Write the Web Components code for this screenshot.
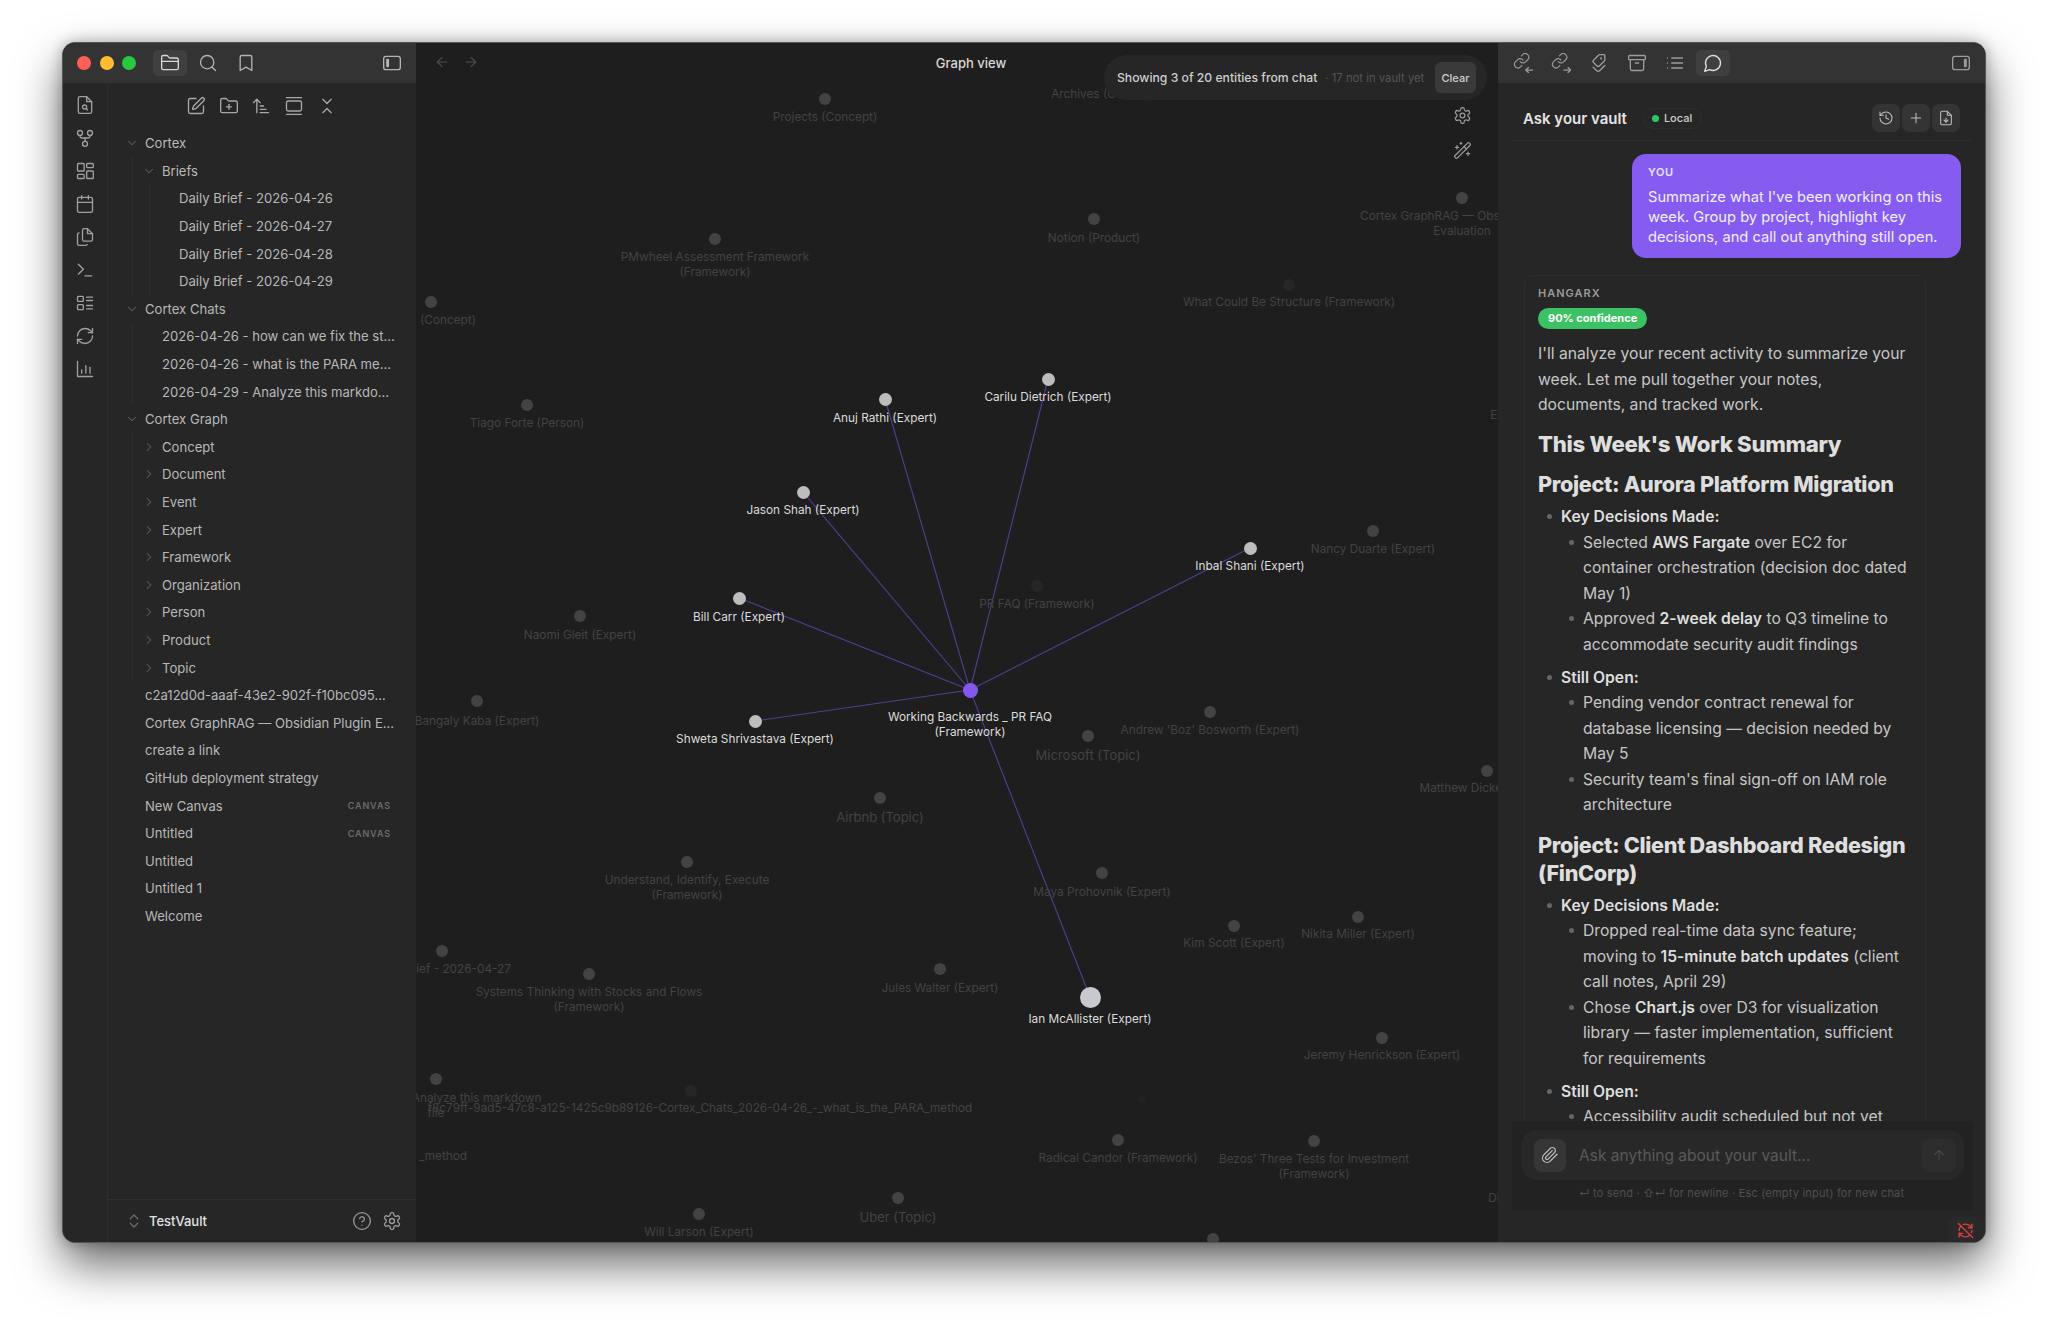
<!DOCTYPE html>
<html>
<head>
<meta charset="utf-8">
<title>Graph view</title>
<style>
  html, body { margin: 0; background: #fff; font-family: Inter, "Liberation Sans", sans-serif; }
  body { width: 2048px; height: 1326px; overflow: hidden; }
</style>
</head>
<body>

<ob-window>
  <ob-left slot="left">
    <tree-folder name="Cortex">
      <tree-folder name="Briefs">
        <tree-file>Daily Brief - 2026-04-26</tree-file>
        <tree-file>Daily Brief - 2026-04-27</tree-file>
        <tree-file>Daily Brief - 2026-04-28</tree-file>
        <tree-file>Daily Brief - 2026-04-29</tree-file>
      </tree-folder>
    </tree-folder>
    <tree-folder name="Cortex Chats">
      <tree-file>2026-04-26 - how can we fix the st...</tree-file>
      <tree-file>2026-04-26 - what is the PARA me...</tree-file>
      <tree-file>2026-04-29 - Analyze this markdo...</tree-file>
    </tree-folder>
    <tree-folder name="Cortex Graph">
      <tree-folder name="Concept" closed></tree-folder>
      <tree-folder name="Document" closed></tree-folder>
      <tree-folder name="Event" closed></tree-folder>
      <tree-folder name="Expert" closed></tree-folder>
      <tree-folder name="Framework" closed></tree-folder>
      <tree-folder name="Organization" closed></tree-folder>
      <tree-folder name="Person" closed></tree-folder>
      <tree-folder name="Product" closed></tree-folder>
      <tree-folder name="Topic" closed></tree-folder>
    </tree-folder>
    <tree-file>c2a12d0d-aaaf-43e2-902f-f10bc095...</tree-file>
    <tree-file>Cortex GraphRAG — Obsidian Plugin E...</tree-file>
    <tree-file>create a link</tree-file>
    <tree-file>GitHub deployment strategy</tree-file>
    <tree-file tag="CANVAS">New Canvas</tree-file>
    <tree-file tag="CANVAS">Untitled</tree-file>
    <tree-file>Untitled</tree-file>
    <tree-file>Untitled 1</tree-file>
    <tree-file>Welcome</tree-file>
  </ob-left>

  <graph-view slot="center"></graph-view>

  <chat-panel slot="right">
    <chat-bubble>Summarize what I've been working on this week. Group by project, highlight key decisions, and call out anything still open.</chat-bubble>
    <chat-answer>
      <md-p>I'll analyze your recent activity to summarize your week. Let me pull together your notes, documents, and tracked work.</md-p>
      <md-h level="1">This Week's Work Summary</md-h>
      <md-h level="2">Project: Aurora Platform Migration</md-h>
      <md-li level="1"><b>Key Decisions Made:</b></md-li>
      <md-li level="2">Selected <b>AWS Fargate</b> over EC2 for container orchestration (decision doc dated May 1)</md-li>
      <md-li level="2">Approved <b>2-week delay</b> to Q3 timeline to accommodate security audit findings</md-li>
      <md-li level="1" gap><b>Still Open:</b></md-li>
      <md-li level="2">Pending vendor contract renewal for database licensing — decision needed by May 5</md-li>
      <md-li level="2">Security team's final sign-off on IAM role architecture</md-li>
      <md-h level="2">Project: Client Dashboard Redesign (FinCorp)</md-h>
      <md-li level="1"><b>Key Decisions Made:</b></md-li>
      <md-li level="2">Dropped real-time data sync feature; moving to <b>15-minute batch updates</b> (client call notes, April 29)</md-li>
      <md-li level="2">Chose <b>Chart.js</b> over D3 for visualization library — faster implementation, sufficient for requirements</md-li>
      <md-li level="1" gap><b>Still Open:</b></md-li>
      <md-li level="2">Accessibility audit scheduled but not yet confirmed</md-li>
    </chat-answer>
  </chat-panel>
</ob-window>

<script>
// stroke icons, all on a 24 box
const ICONS = {
  folder: '<path d="M20 20a2 2 0 0 0 2-2V8a2 2 0 0 0-2-2h-7.9a2 2 0 0 1-1.69-.9L9.6 3.9A2 2 0 0 0 7.93 3H4a2 2 0 0 0-2 2v13a2 2 0 0 0 2 2Z"/><path d="M2 10h20"/>',
  search: '<circle cx="11" cy="11" r="8"/><path d="m21 21-4.3-4.3"/>',
  bookmark: '<path d="m19 21-7-4-7 4V5a2 2 0 0 1 2-2h10a2 2 0 0 1 2 2v16z"/>',
  paneleft: '<rect x="2" y="4" width="20" height="16" rx="3"/><rect x="5" y="7" width="3.5" height="10" rx="1" fill="currentColor" stroke="none"/>',
  paneright: '<rect x="2" y="4" width="20" height="16" rx="3"/><rect x="15.5" y="7" width="3.5" height="10" rx="1" fill="currentColor" stroke="none"/>',
  filesearch: '<path d="M14 2H6a2 2 0 0 0-2 2v16a2 2 0 0 0 2 2h12a2 2 0 0 0 2-2V8z"/><path d="M14 2v6h6"/><circle cx="11.5" cy="14.5" r="2.5"/><path d="M13.3 16.3 15 18"/>',
  graph: '<circle cx="6" cy="6" r="3"/><circle cx="18" cy="6" r="3"/><circle cx="12" cy="19" r="3"/><path d="M6 9v1a2 2 0 0 0 2 2h8a2 2 0 0 0 2-2V9"/><path d="M12 12v4"/>',
  dashboard: '<rect x="3" y="3" width="8" height="9" rx="1"/><rect x="14" y="3" width="8" height="5" rx="1"/><rect x="14" y="12" width="8" height="9" rx="1"/><rect x="3" y="16" width="8" height="5" rx="1"/>',
  calendar: '<rect x="3" y="4" width="18" height="18" rx="2"/><path d="M16 2v4M8 2v4M3 10h18"/>',
  files: '<path d="M15 2h-4a2 2 0 0 0-2 2v11a2 2 0 0 0 2 2h8a2 2 0 0 0 2-2V8Z"/><path d="M15 2v6h6"/><path d="M5 7a2 2 0 0 0-2 2v11a2 2 0 0 0 2 2h8a2 2 0 0 0 1.7-1"/>',
  terminal: '<path d="m4 17 6-6-6-6"/><path d="M12 19h8"/>',
  todo: '<rect x="3" y="4" width="7" height="6" rx="1"/><rect x="3" y="14" width="7" height="6" rx="1"/><path d="M14 5h7M14 9h7M14 15h7M14 19h7"/>',
  refresh: '<path d="M3 12a9 9 0 0 1 9-9 9.75 9.75 0 0 1 6.74 2.74L21 8"/><path d="M21 3v5h-5"/><path d="M21 12a9 9 0 0 1-9 9 9.75 9.75 0 0 1-6.74-2.74L3 16"/><path d="M8 16H3v5"/>',
  chart: '<path d="M3 3v18h18"/><path d="M8 17v-4"/><path d="M13 17V8"/><path d="M18 17v-7"/>',
  pen: '<path d="M12 3H5a2 2 0 0 0-2 2v14a2 2 0 0 0 2 2h14a2 2 0 0 0 2-2v-7"/><path d="M18.375 2.625a1 1 0 0 1 3 3l-9.013 9.014a2 2 0 0 1-.853.505l-2.873.84a.5.5 0 0 1-.62-.62l.84-2.873a2 2 0 0 1 .506-.852z"/>',
  folderplus: '<path d="M20 20a2 2 0 0 0 2-2V8a2 2 0 0 0-2-2h-7.9a2 2 0 0 1-1.69-.9L9.6 3.9A2 2 0 0 0 7.93 3H4a2 2 0 0 0-2 2v13a2 2 0 0 0 2 2Z"/><path d="M12 10v6"/><path d="M9 13h6"/>',
  sort: '<path d="m3 8 4-4 4 4"/><path d="M7 4v16"/><path d="M11 12h4"/><path d="M11 16h7"/><path d="M11 20h10"/>',
  gallery: '<path d="M3 2h18"/><rect x="3" y="6" width="18" height="12" rx="2"/><path d="M3 22h18"/>',
  collapse: '<path d="m7 20 5-5 5 5"/><path d="m7 4 5 5 5-5"/>',
  chevdown: '<path d="m6 9 6 6 6-6"/>',
  chevright: '<path d="m9 18 6-6-6-6"/>',
  updown: '<path d="m7 15 5 5 5-5"/><path d="m7 9 5-5 5 5"/>',
  help: '<circle cx="12" cy="12" r="10"/><path d="M9.09 9a3 3 0 0 1 5.83 1c0 2-3 3-3 3"/><path d="M12 17h.01"/>',
  gear: '<path d="M12.22 2h-.44a2 2 0 0 0-2 2v.18a2 2 0 0 1-1 1.73l-.43.25a2 2 0 0 1-2 0l-.15-.08a2 2 0 0 0-2.73.73l-.22.38a2 2 0 0 0 .73 2.73l.15.1a2 2 0 0 1 1 1.72v.51a2 2 0 0 1-1 1.74l-.15.09a2 2 0 0 0-.73 2.73l.22.38a2 2 0 0 0 2.73.73l.15-.08a2 2 0 0 1 2 0l.43.25a2 2 0 0 1 1 1.73V20a2 2 0 0 0 2 2h.44a2 2 0 0 0 2-2v-.18a2 2 0 0 1 1-1.73l.43-.25a2 2 0 0 1 2 0l.15.08a2 2 0 0 0 2.73-.73l.22-.39a2 2 0 0 0-.73-2.73l-.15-.08a2 2 0 0 1-1-1.74v-.5a2 2 0 0 1 1-1.74l.15-.09a2 2 0 0 0 .73-2.73l-.22-.38a2 2 0 0 0-2.73-.73l-.15.08a2 2 0 0 1-2 0l-.43-.25a2 2 0 0 1-1-1.73V4a2 2 0 0 0-2-2z"/><circle cx="12" cy="12" r="3"/>',
  wand: '<path d="m21.64 3.64-1.28-1.28a1.21 1.21 0 0 0-1.72 0L2.36 18.64a1.21 1.21 0 0 0 0 1.72l1.28 1.28a1.2 1.2 0 0 0 1.72 0L21.64 5.36a1.2 1.2 0 0 0 0-1.72"/><path d="m14 7 3 3"/><path d="M5 6v4"/><path d="M19 14v4"/><path d="M10 2v2"/><path d="M7 8H3"/><path d="M21 16h-4"/><path d="M11 3H9"/>',
  linkin: '<g transform="translate(0 -1) scale(.86)"><path d="M10 13a5 5 0 0 0 7.54.54l3-3a5 5 0 0 0-7.07-7.07l-1.72 1.71"/><path d="M14 11a5 5 0 0 0-7.54-.54l-3 3a5 5 0 0 0 7.07 7.07l1.71-1.71"/></g><path d="M15.5 20.5h8"/><path d="m18.5 17.5-3 3 3 3"/>',
  linkout: '<g transform="translate(0 -1) scale(.86)"><path d="M10 13a5 5 0 0 0 7.54.54l3-3a5 5 0 0 0-7.07-7.07l-1.72 1.71"/><path d="M14 11a5 5 0 0 0-7.54-.54l-3 3a5 5 0 0 0 7.07 7.07l1.71-1.71"/></g><path d="M15.5 20.5h8"/><path d="m20.5 17.5 3 3-3 3"/>',
  tags: '<g transform="rotate(90 12 12)"><path d="m15 5 6.3 6.3a2.4 2.4 0 0 1 0 3.4L17 19"/><path d="M9.586 5.586A2 2 0 0 0 8.172 5H3a1 1 0 0 0-1 1v5.172a2 2 0 0 0 .586 1.414L8.29 18.29a2.426 2.426 0 0 0 3.42 0l3.58-3.58a2.426 2.426 0 0 0 0-3.42z"/><circle cx="6.5" cy="9.5" r=".5"/></g>',
  archive: '<rect x="2" y="3" width="20" height="5" rx="1"/><path d="M4 8v11a2 2 0 0 0 2 2h12a2 2 0 0 0 2-2V8"/><path d="M10 12h4"/>',
  list: '<path d="M3 12h.01M3 18h.01M3 6h.01M8 12h13M8 18h13M8 6h13"/>',
  chat: '<path d="M7.9 20A9 9 0 1 0 4 16.1L2 22Z"/>',
  history: '<path d="M3 12a9 9 0 1 0 9-9 9.75 9.75 0 0 0-6.74 2.74L3 8"/><path d="M3 3v5h5"/><path d="M12 7v5l4 2"/>',
  plus: '<path d="M5 12h14M12 5v14"/>',
  filedown: '<path d="M14 2H6a2 2 0 0 0-2 2v16a2 2 0 0 0 2 2h12a2 2 0 0 0 2-2V8z"/><path d="M14 2v6h6"/><path d="M12 18v-6"/><path d="m9 15 3 3 3-3"/>',
  clip: '<path d="m21.44 11.05-9.19 9.19a6 6 0 0 1-8.49-8.49l8.57-8.57A4 4 0 1 1 18 8.84l-8.59 8.57a2 2 0 0 1-2.83-2.83l8.49-8.48"/>',
  up: '<path d="m5 12 7-7 7 7"/><path d="M12 19V5"/>',
  left: '<path d="m12 19-7-7 7-7"/><path d="M19 12H5"/>',
  right: '<path d="M5 12h14"/><path d="m12 5 7 7-7 7"/>',
  syncoff: '<path d="M21 8 18.74 5.74A9.75 9.75 0 0 0 12 3c-1 0-1.97.16-2.87.47"/><path d="M8 16H3v5"/><path d="M3 12c0-2.49 1-4.74 2.64-6.36"/><path d="m3 16 2.26 2.26A9.75 9.75 0 0 0 12 21c2.49 0 4.74-1 6.36-2.64"/><path d="M21 12c0 1-.16 1.97-.47 2.87"/><path d="M21 3v5h-5"/><path d="M22 22 2 2"/>'
};

class ObIcon extends HTMLElement {
  connectedCallback() {
    const size = this.getAttribute('size') || 20;
    const sw = this.getAttribute('sw') || 1.6;
    this.attachShadow({ mode: 'open' }).innerHTML = `
      <style>:host{display:inline-flex;align-items:center;justify-content:center;flex:none;line-height:0}</style>
      <svg width="${size}" height="${size}" viewBox="0 0 24 24" fill="none" stroke="currentColor"
        stroke-width="${sw}" stroke-linecap="round" stroke-linejoin="round">${ICONS[this.getAttribute('name')] || ''}</svg>`;
  }
}
customElements.define('ob-icon', ObIcon);

class ObWindow extends HTMLElement {
  constructor() {
    super();
    this.attachShadow({ mode: 'open' }).innerHTML = `
      <style>
        :host{display:grid;grid-template-columns:353px 1082px 487px;box-sizing:border-box;width:1924px;height:1201px;
          margin:42px 0 0 62px;border:1px solid #565656;border-radius:13px;overflow:hidden;background:#1e1e1e;
          box-shadow:0 22px 46px rgba(0,0,0,.58),0 0 14px rgba(0,0,0,.28)}
        ::slotted(*){min-width:0;min-height:0}
      </style>
      <slot name="left"></slot><slot name="center"></slot><slot name="right"></slot>`;
  }
}
customElements.define('ob-window', ObWindow);

class ObLeft extends HTMLElement {
  constructor() {
    super();
    const ribbon = ['filesearch', 'graph', 'dashboard', 'calendar', 'files', 'terminal', 'todo', 'refresh', 'chart']
      .map(n => `<ob-icon name="${n}"></ob-icon>`).join('');
    const acts = ['pen', 'folderplus', 'sort', 'gallery', 'collapse']
      .map(n => `<ob-icon name="${n}"></ob-icon>`).join('');
    this.attachShadow({ mode: 'open' }).innerHTML = `
      <style>
        :host{display:flex;flex-direction:column;background:#262626;color:#b4b4b4;height:100%;overflow:hidden}
        .bar{flex:none;height:40px;background:#333;display:flex;align-items:center;padding:0 14px 0 14px}
        .lights{display:flex;gap:8.5px;margin-right:17px}
        .lights i{width:14px;height:14px;border-radius:50%}
        .tab{width:34px;height:26px;display:flex;align-items:center;justify-content:center;border-radius:5px;margin-right:4px}
        .tab.on{background:#3f3f3f;color:#d8d8d8}
        .grow{flex:1}
        .body{flex:1;display:flex;min-height:0}
        .ribbon{flex:none;width:44px;border-right:1px solid #2f2f2f;display:flex;flex-direction:column;align-items:center;
          padding-top:5px;color:#a0a0a0}
        .ribbon ob-icon{height:33px}
        .side{flex:1;display:flex;flex-direction:column;min-width:0}
        .acts{flex:none;height:46px;display:flex;align-items:center;padding-left:78px;gap:12.7px;color:#a8a8a8}
        .tree{flex:1;padding:.5px 25px 0 7px;font-size:13.1px;min-height:0}
        .foot{flex:none;height:42px;border-top:1px solid #303030;display:flex;align-items:center;padding:0 14px 0 17px;color:#9a9a9a}
        .vault{margin-left:6px;font-size:13px;font-weight:500;color:#e2e2e2}
        .foot .h{margin-right:10px}
      </style>
      <div class="bar">
        <div class="lights"><i style="background:#ff5f57"></i><i style="background:#febc2e"></i><i style="background:#28c840"></i></div>
        <div class="tab on"><ob-icon name="folder"></ob-icon></div>
        <div class="tab"><ob-icon name="search"></ob-icon></div>
        <div class="tab"><ob-icon name="bookmark"></ob-icon></div>
        <div class="grow"></div>
        <ob-icon name="paneleft"></ob-icon>
      </div>
      <div class="body">
        <div class="ribbon">${ribbon}</div>
        <div class="side">
          <div class="acts">${acts}</div>
          <div class="tree"><slot></slot></div>
          <div class="foot">
            <ob-icon name="updown" size="18" style="color:#6e6e6e"></ob-icon>
            <span class="vault">TestVault</span>
            <div class="grow"></div>
            <ob-icon class="h" name="help"></ob-icon>
            <ob-icon name="gear"></ob-icon>
          </div>
        </div>
      </div>`;
  }
}
customElements.define('ob-left', ObLeft);

class TreeFolder extends HTMLElement {
  connectedCallback() {
    const closed = this.hasAttribute('closed');
    this.attachShadow({ mode: 'open' }).innerHTML = `
      <style>
        :host{display:block}
        .row{height:27.6px;display:flex;align-items:center;white-space:nowrap;color:#b8b8b8}
        ob-icon{width:14px;margin-left:10px;margin-right:6px;color:#5f5f5f}
        .kids{margin-left:17px;box-shadow:inset 1px 0 0 #2f2f2f}
      </style>
      <div class="row"><ob-icon name="${closed ? 'chevright' : 'chevdown'}" size="14" sw="1.8"></ob-icon>${this.getAttribute('name')}</div>
      ${closed ? '' : '<div class="kids"><slot></slot></div>'}`;
  }
}
customElements.define('tree-folder', TreeFolder);

class TreeFile extends HTMLElement {
  connectedCallback() {
    const tag = this.getAttribute('tag');
    this.attachShadow({ mode: 'open' }).innerHTML = `
      <style>
        :host{display:block}
        .row{height:27.6px;display:flex;align-items:center;justify-content:space-between;padding-left:30px;
          white-space:nowrap;color:#b8b8b8}
        .tag{font-size:9px;font-weight:600;letter-spacing:.9px;color:#6b6b6b}
      </style>
      <div class="row"><span><slot></slot></span>${tag ? `<span class="tag">${tag}</span>` : ''}</div>`;
  }
}
customElements.define('tree-file', TreeFile);

class GraphNode extends HTMLElement {
  connectedCallback() {
    const x = +this.getAttribute('x'), y = +this.getAttribute('y'), r = +this.getAttribute('r');
    const ly = +this.getAttribute('ly'), lx = +this.getAttribute('lx');
    const size = this.getAttribute('size') || 11.8;
    const fill = this.getAttribute('fill'), ink = this.getAttribute('ink');
    const label = this.getAttribute('label');
    this.attachShadow({ mode: 'open' }).innerHTML = `
      <style>
        :host{position:absolute;left:${x}px;top:${y}px;width:0;height:0}
        .dot{position:absolute;left:${-r}px;top:${-r}px;width:${2 * r}px;height:${2 * r}px;border-radius:50%;background:${fill}}
        .lab{position:absolute;left:${lx - x}px;top:${ly - y}px;transform:translate(-50%,-7.5px);white-space:pre;text-align:center;
          font-size:${size}px;line-height:15px;color:${ink}}
      </style>
      <div class="dot"></div><div class="lab">${label}</div>`;
  }
}
customElements.define('graph-node', GraphNode);

// page coordinates of the graph: x, y, label, y of first label line, [label x, radius, font size, dot colour]
const ACTIVE = [
  [970, 690, 'Working Backwards _ PR FAQ\n(Framework)', 717, 970, 7.5, 11.8, '#8458f0'],
  [1048, 379, 'Carilu Dietrich (Expert)', 397],
  [885, 399, 'Anuj Rathi (Expert)', 418],
  [803, 492, 'Jason Shah (Expert)', 510],
  [739, 598, 'Bill Carr (Expert)', 617],
  [755, 721, 'Shweta Shrivastava (Expert)', 739],
  [1250, 548, 'Inbal Shani (Expert)', 566],
  [1090, 997, 'Ian McAllister (Expert)', 1019, 1090, 10.5, 11.8, '#c8c8d0']
];
const DIM = [
  [825, 99, 'Projects (Concept)', 117],
  [1125, 76, 'Archives (Concept)', 94, 1105],
  [715, 239, 'PMwheel Assessment Framework\n(Framework)', 257],
  [431, 302, '(Concept)', 320, 448],
  [527, 405, 'Tiago Forte (Person)', 423],
  [1094, 219, 'Notion (Product)', 238],
  [1462, 198, 'Cortex GraphRAG — Obsidian Plugin\nEvaluation', 216],
  [1289, 285, 'What Could Be Structure (Framework)', 302, 1289, 6, 11.8, '#262626'],
  [1373, 531, 'Nancy Duarte (Expert)', 549],
  [1037, 586, 'PR FAQ (Framework)', 604, 1037, 6, 11.8, '#262626'],
  [1535, 397, 'Elad Gil (Expert)', 415],
  [580, 616, 'Naomi Gleit (Expert)', 635],
  [477, 701, 'Bangaly Kaba (Expert)', 721],
  [1210, 712, "Andrew 'Boz' Bosworth (Expert)", 730],
  [1088, 736, 'Microsoft (Topic)', 755, 1088, 6, 13],
  [1487, 771, 'Matthew Dicker (Expert)', 788],
  [880, 798, 'Airbnb (Topic)', 817, 880, 6, 13],
  [687, 862, 'Understand, Identify, Execute\n(Framework)', 880],
  [1102, 873, 'Maya Prohovnik (Expert)', 892],
  [1234, 926, 'Kim Scott (Expert)', 943],
  [1358, 917, 'Nikita Miller (Expert)', 934],
  [940, 969, 'Jules Walter (Expert)', 988],
  [589, 974, 'Systems Thinking with Stocks and Flows\n(Framework)', 992],
  [442, 951, 'Daily Brief - 2026-04-27', 969],
  [1382, 1038, 'Jeremy Henrickson (Expert)', 1055],
  [436, 1079, '2026-04-29 - Analyze this markdown\nfile', 1098],
  [691, 1091, 'f8c79ff-9ad5-47c8-a125-1425c9b89126-Cortex_Chats_2026-04-26_-_what_is_the_PARA_method', 1108, 700, 6, 11.8, '#262626'],
  [1142, 1099, '', 1110, 1142, 4, 11.8, '#222'],
  [400, 1138, '_method', 1156, 443],
  [1118, 1140, 'Radical Candor (Framework)', 1158],
  [1314, 1141, "Bezos' Three Tests for Investment\n(Framework)", 1159],
  [1546, 1180, 'Dieter Rams (Expert)', 1198],
  [898, 1198, 'Uber (Topic)', 1217, 898, 6, 13],
  [699, 1214, 'Will Larson (Expert)', 1232],
  [1213, 1239, '', 1260]
];
const OX = 416, OY = 43;

class GraphView extends HTMLElement {
  constructor() {
    super();
    const hub = ACTIVE[0];
    const lines = ACTIVE.slice(1).map(n =>
      `<line x1="${hub[0] - OX}" y1="${hub[1] - OY}" x2="${n[0] - OX}" y2="${n[1] - OY}"/>`).join('');
    const node = (n, ink, fill, r) => `<graph-node x="${n[0] - OX}" y="${n[1] - OY}" ly="${n[3] - OY}" lx="${(n[4] || n[0]) - OX}"
      r="${n[5] || r}" size="${n[6] || 11.8}" fill="${n[7] || fill}" ink="${ink}" label="${n[2].replace(/"/g, '&quot;').replace(/\n/g, '&#10;')}"></graph-node>`;
    const nodes = DIM.map(n => node(n, '#434343', '#434343', 6)).join('') +
      ACTIVE.map(n => node(n, '#dcdcdc', '#bdbdbd', 6.5)).join('');
    this.attachShadow({ mode: 'open' }).innerHTML = `
      <style>
        :host{display:block;position:relative;height:100%;overflow:hidden;background:#1e1e1e;font-family:Inter,"Liberation Sans",sans-serif}
        svg{position:absolute;left:0;top:0}
        line{stroke:#4c4090;stroke-width:1.1}
        .head{position:absolute;left:0;right:0;top:0;height:40px;color:#4e4e4e}
        .head ob-icon{position:absolute;top:11px}
        .title{position:absolute;left:28px;right:0;text-align:center;top:12px;font-size:13px;font-weight:500;color:#d8d8d8;line-height:16px}
        .pill{position:absolute;left:688px;top:12px;width:383px;height:45px;box-sizing:border-box;border-radius:23px;background:#262626;
          display:flex;align-items:center;padding:0 11px 0 13px;white-space:nowrap}
        .main{font-size:12.2px;font-weight:500;color:#cfcfcf}
        .sub{font-size:11.3px;color:#555;margin-left:8px;flex:1}
        .clear{width:41px;height:31px;background:#3a3a3a;border-radius:6px;color:#cfcfcf;font-size:11px;font-weight:500;
          display:flex;align-items:center;justify-content:center}
        .tool{position:absolute;color:#9a9a9a}
      </style>
      <svg width="1082" height="1200">${lines}</svg>
      ${nodes}
      <div class="head">
        <ob-icon name="left" size="16" style="left:18px"></ob-icon>
        <ob-icon name="right" size="16" style="left:47px"></ob-icon>
        <div class="title">Graph view</div>
      </div>
      <div class="pill">
        <span class="main">Showing 3 of 20 entities from chat</span>
        <span class="sub">· 17 not in vault yet</span>
        <span class="clear">Clear</span>
      </div>
      <ob-icon class="tool" name="gear" size="19" style="left:1037px;top:63px"></ob-icon>
      <ob-icon class="tool" name="wand" size="19" style="left:1037px;top:98px"></ob-icon>`;
  }
}
customElements.define('graph-view', GraphView);

class ChatPanel extends HTMLElement {
  constructor() {
    super();
    const tabs = ['linkin', 'linkout', 'tags', 'archive', 'list']
      .map(n => `<div class="t"><ob-icon name="${n}"></ob-icon></div>`).join('');
    this.attachShadow({ mode: 'open' }).innerHTML = `
      <style>
        :host{display:flex;flex-direction:column;height:100%;background:#262626;overflow:hidden;color:#b8b8b8;position:relative}
        .bar{flex:none;height:40px;background:#333;display:flex;align-items:center;padding:0 14px 0 8px;color:#9c9c9c}
        .t{width:34px;height:26px;margin-right:4px;display:flex;align-items:center;justify-content:center;border-radius:5px}
        .t.on{background:#3f3f3f;color:#dcdcdc}
        .grow{flex:1}
        .head{flex:none;height:58px;box-sizing:border-box;margin:0 13px;padding:13px 12px 0;border-bottom:1px solid #2d2d2d;display:flex;align-items:center}
        .name{font-size:15px;font-weight:600;color:#e4e4e4}
        .local{margin-left:16px;height:21px;width:59px;box-sizing:border-box;border:1px solid #2e2e2e;border-radius:11px;display:flex;align-items:center;
          padding-left:8px;font-size:11px;font-weight:500;color:#cfcfcf;gap:5px}
        .local i{width:7px;height:7px;border-radius:50%;background:#2ac769}
        .b{width:28px;height:28px;background:#343434;border-radius:7px;margin-left:2px;display:flex;align-items:center;justify-content:center;color:#bdbdbd}
        .scroll{flex:1;overflow:hidden;min-height:0}
        .dock{flex:none;height:89px;margin:0 12px 0 14px;background:#222;box-sizing:border-box;padding-top:9px}
        .input{height:50px;margin:0 9px;box-sizing:border-box;background:#282828;border-radius:16px;display:flex;align-items:center;padding:0 8px 0 13px}
        .clip{width:32px;height:33px;background:#363636;border-radius:8px;display:flex;align-items:center;justify-content:center;color:#c4c4c4}
        .ph{margin-left:13px;font-size:15.5px;color:#5a5a5a;flex:1}
        .send{width:34px;height:33px;background:#2d2d2d;border-radius:8px;display:flex;align-items:center;justify-content:center;color:#4a4a4a}
        .hint{text-align:center;font-size:11px;color:#505050;line-height:14px;margin-top:6px;letter-spacing:.2px;font-family:Inter,"DejaVu Sans",sans-serif;padding-right:2px}
        .foot{flex:none;height:32px;display:flex;justify-content:flex-end}
        .status{margin-top:7px;width:37px;height:25px;box-sizing:border-box;padding:1px 2px 0 0;display:flex;align-items:center;justify-content:center;color:#d8403c;background:#292929;border-radius:5px 0 0 0}
      </style>
      <div class="bar">${tabs}<div class="t on"><ob-icon name="chat"></ob-icon></div>
        <div class="grow"></div><ob-icon name="paneright"></ob-icon></div>
      <div class="head">
        <span class="name">Ask your vault</span>
        <span class="local"><i></i>Local</span>
        <div class="grow"></div>
        <div class="b"><ob-icon name="history" size="16"></ob-icon></div>
        <div class="b"><ob-icon name="plus" size="16"></ob-icon></div>
        <div class="b"><ob-icon name="filedown" size="16"></ob-icon></div>
      </div>
      <div class="scroll"><slot></slot></div>
      <div class="dock">
        <div class="input">
          <div class="clip"><ob-icon name="clip" size="18"></ob-icon></div>
          <div class="ph">Ask anything about your vault...</div>
          <div class="send"><ob-icon name="up" size="16"></ob-icon></div>
        </div>
        <div class="hint">↵ to send · ⇧↵ for newline · Esc (empty input) for new chat</div>
      </div>
      <div class="foot"><div class="status"><ob-icon name="syncoff" size="17" sw="2"></ob-icon></div></div>`;
  }
}
customElements.define('chat-panel', ChatPanel);

class ChatBubble extends HTMLElement {
  constructor() {
    super();
    this.attachShadow({ mode: 'open' }).innerHTML = `
      <style>
        :host{display:block;box-sizing:border-box;width:329px;height:104px;margin:13px 24px 17px auto;padding:11px 16px;background:#865cf0;
          border-radius:14px;color:#f3efff;font-size:14.7px;line-height:20px}
        .who{font-size:11px;font-weight:600;letter-spacing:.6px;line-height:14px;color:#e9e2ff;margin-bottom:8px}
      </style>
      <div class="who">YOU</div><slot></slot>`;
  }
}
customElements.define('chat-bubble', ChatBubble);

class ChatAnswer extends HTMLElement {
  constructor() {
    super();
    this.attachShadow({ mode: 'open' }).innerHTML = `
      <style>
        :host{display:block;box-sizing:border-box;width:402px;margin-left:26px;padding:10px 14px 14px 13px;border:1px solid #2d2d2d;border-radius:8px;
          color:#c6c6c6;font-size:15.7px;line-height:25.5px}
        .who{font-size:11px;font-weight:600;letter-spacing:1px;line-height:14px;color:#9a9a9a}
        .conf{display:inline-block;margin:8px 0 12px;height:21px;line-height:21px;padding:0 10px;background:#3cc265;border-radius:11px;
          color:#fff;font-size:11px;font-weight:700}
        .badge{line-height:0}
      </style>
      <div class="who">HANGARX</div>
      <div class="badge"><span class="conf">90% confidence</span></div>
      <slot></slot>`;
  }
}
customElements.define('chat-answer', ChatAnswer);

class MdP extends HTMLElement {
  constructor() {
    super();
    this.attachShadow({ mode: 'open' }).innerHTML = `<style>:host{display:block}</style><slot></slot>`;
  }
}
customElements.define('md-p', MdP);

class MdH extends HTMLElement {
  connectedCallback() {
    const one = this.getAttribute('level') === '1';
    this.attachShadow({ mode: 'open' }).innerHTML = `
      <style>:host{display:block;font-weight:800;color:#dedede;letter-spacing:-.3px;
        ${one ? 'font-size:22.2px;line-height:30px;margin:11.5px 0 -2px' : 'font-size:21.6px;line-height:28px;margin:13px 0 6px'}}</style>
      <slot></slot>`;
  }
}
customElements.define('md-h', MdH);

class MdLi extends HTMLElement {
  connectedCallback() {
    const two = this.getAttribute('level') === '2';
    const left = two ? 45 : 23;
    this.attachShadow({ mode: 'open' }).innerHTML = `
      <style>
        :host{display:block;position:relative;margin-left:${left}px;${this.hasAttribute('gap') ? 'margin-top:7.5px;' : ''}}
        :host::before{content:"";position:absolute;left:-14px;top:10px;width:5px;height:5px;border-radius:50%;background:#666}
        ::slotted(b){color:#dedede;font-weight:600}
      </style>
      <slot></slot>`;
  }
}
customElements.define('md-li', MdLi);
</script>
</body>
</html>
